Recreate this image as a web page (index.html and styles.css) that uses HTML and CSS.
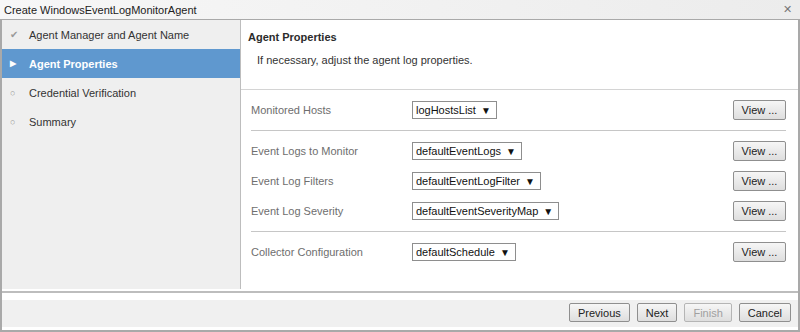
FILE: index.html
```html
<!DOCTYPE html>
<html lang="en">
<head>
    <meta charset="UTF-8">
    <title>Create WindowsEventLogMonitorAgent</title>
    <link rel="stylesheet" href="styles.css">
</head>
<body>
    <div class="dialogo">
        <div class="titulo">
            <span>Create WindowsEventLogMonitorAgent</span>
            <span class="fechar">&#x2715;</span>
        </div>
        <div class="corpo">
            <ul class="passos">
                <li class="feito"><span class="marca">&#x2714;</span>Agent Manager and Agent Name</li>
                <li class="atual"><span class="marca">&#x25B6;</span>Agent Properties</li>
                <li><span class="marca">&#x25CB;</span>Credential Verification</li>
                <li><span class="marca">&#x25CB;</span>Summary</li>
            </ul>
            <div class="conteudo">
                <div class="cabecalho">
                    <h1>Agent Properties</h1>
                    <p>If necessary, adjust the agent log properties.</p>
                </div>
                <div class="grupo">
                    <div class="linha">
                        <label>Monitored Hosts</label>
                        <span class="lista">logHostsList <i>&#x25BC;</i></span>
                        <button class="ver">View ...</button>
                    </div>
                </div>
                <div class="grupo">
                    <div class="linha">
                        <label>Event Logs to Monitor</label>
                        <span class="lista">defaultEventLogs <i>&#x25BC;</i></span>
                        <button class="ver">View ...</button>
                    </div>
                    <div class="linha">
                        <label>Event Log Filters</label>
                        <span class="lista">defaultEventLogFilter <i>&#x25BC;</i></span>
                        <button class="ver">View ...</button>
                    </div>
                    <div class="linha">
                        <label>Event Log Severity</label>
                        <span class="lista">defaultEventSeverityMap <i>&#x25BC;</i></span>
                        <button class="ver">View ...</button>
                    </div>
                </div>
                <div class="grupo ultimo">
                    <div class="linha">
                        <label>Collector Configuration</label>
                        <span class="lista">defaultSchedule <i>&#x25BC;</i></span>
                        <button class="ver">View ...</button>
                    </div>
                </div>
            </div>
        </div>
        <div class="rodape">
            <button>Previous</button>
            <button>Next</button>
            <button disabled>Finish</button>
            <button>Cancel</button>
        </div>
    </div>
</body>
</html>
```

FILE: styles.css
```css
*{
    margin: 0px;
    padding: 0px;
    box-sizing: border-box;
}

body{
    background-color: white;
    font-family: "Liberation Sans", Arial, sans-serif;
    font-size: 11px;
    color: #333333;
}

.dialogo{
    width: 800px;
    height: 332px;
    border: 2px solid #a9a9a9;
    border-top: 0px;
    display: flex;
    flex-direction: column;
}

.titulo{
    height: 20px;
    margin-left: -2px;
    margin-right: -2px;
    padding: 0px 8px 0px 4px;
    display: flex;
    align-items: center;
    justify-content: space-between;
    border-bottom: 1px solid #a9a9a9;
    background: linear-gradient(90deg, #f7f7f7, #ececec);
    color: #222222;
    font-size: 11px;
}

.fechar{
    color: #777777;
    font-size: 11px;
}

.corpo{
    display: flex;
    height: 269px;
}

.passos{
    list-style: none;
    width: 239px;
    background-color: #efefef;
    border-right: 1px solid #bdbdbd;
}

.passos li{
    height: 29px;
    display: flex;
    align-items: center;
    padding-left: 8px;
    color: #333333;
}

.passos .marca{
    width: 19px;
    font-size: 9px;
    color: #999999;
}

.passos .feito .marca{
    font-size: 10px;
}

.passos li.atual{
    background-color: #5f98cf;
    color: white;
    font-weight: bold;
}

.passos .atual .marca{
    color: white;
    font-size: 8px;
}

.conteudo{
    flex: 1;
    padding: 0px 12px 0px 10px;
}

.cabecalho{
    height: 70px;
    margin: 0px -12px 0px -10px;
    padding: 11px 0px 0px 7px;
    border-bottom: 1px solid #d4d4d4;
}

.cabecalho h1{
    font-size: 11px;
    font-weight: bold;
    color: #2b2b2b;
}

.cabecalho p{
    margin-top: 11px;
    padding-left: 9px;
    color: #333333;
}

.grupo{
    padding: 5px 0px;
    border-bottom: 1px solid #c6c6c6;
}

.grupo.ultimo{
    border-bottom: 0px;
}

.linha{
    height: 30px;
    display: flex;
    align-items: center;
}

.linha label{
    width: 161px;
    color: #6e6e6e;
}

.lista{
    height: 18px;
    padding: 0px 5px 0px 3px;
    border: 1px solid #8e8e8e;
    background-color: white;
    color: #111111;
    display: flex;
    align-items: center;
}

.lista i{
    font-style: normal;
    font-size: 10px;
    margin-left: 5px;
}

.ver{
    margin-left: auto;
    width: 53px;
    height: 20px;
}

button{
    font-family: "Liberation Sans", Arial, sans-serif;
    font-size: 11px;
    color: #222222;
    border: 1px solid #8f8f8f;
    border-radius: 2px;
    background: linear-gradient(#f6f6f6, #dedede);
}

button:disabled{
    color: #a0a0a0;
    border-color: #b5b5b5;
}

.rodape{
    flex: 1;
    border-top: 2px solid #bdbdbd;
    margin-top: 2px;
    padding: 10px 7px 0px 0px;
    display: flex;
    justify-content: flex-end;
    align-items: flex-start;
    gap: 7px;
    background-color: white;
    background-image: linear-gradient(#f0f0f0, #f0f0f0);
    background-size: 100% 27px;
    background-position: 0px 7px;
    background-repeat: no-repeat;
}

.rodape button{
    height: 19px;
    padding: 0px 8px;
}
```
